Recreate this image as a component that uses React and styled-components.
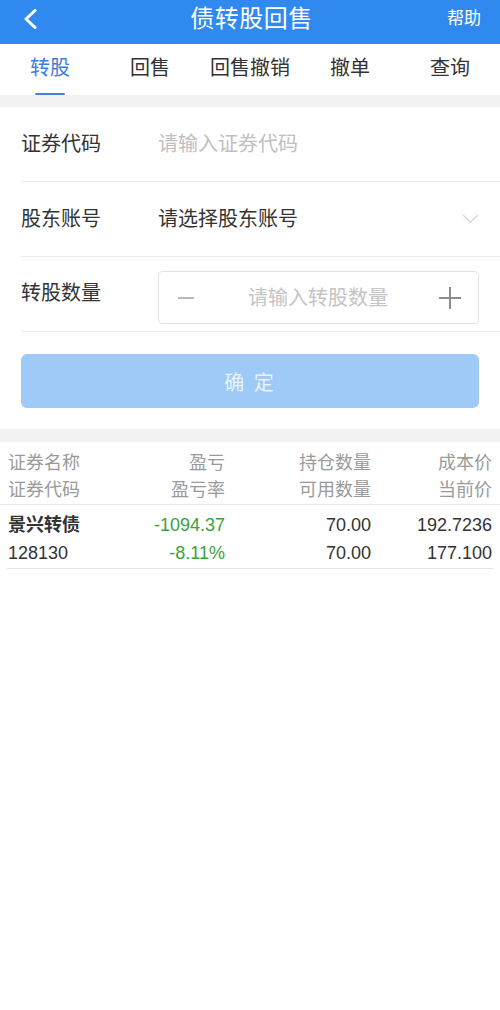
import React from "react";
import styled, { createGlobalStyle } from "styled-components";

const Global = createGlobalStyle`
  html, body { margin: 0; padding: 0; background: #ffffff; }
  body {
    font-family: "Liberation Sans", "Noto Sans CJK SC", sans-serif;
    color: #333333;
  }
  * { box-sizing: border-box; }
`;

const Page = styled.div`
  width: 500px;
  min-height: 1010px;
  background: #ffffff;
`;

const Header = styled.header`
  height: 44px;
  background: #2f89ef;
  display: flex;
  align-items: center;
  padding: 0 19px 7px 22px;
  color: #ffffff;
`;

const BackButton = styled.div`
  width: 90px;
  display: flex;
  align-items: center;
`;

const Title = styled.h1`
  flex: 1;
  margin: 0;
  text-align: center;
  font-size: 24px;
  font-weight: 400;
  line-height: 30px;
  letter-spacing: 0.5px;
`;

const HeaderAction = styled.div`
  width: 90px;
  text-align: right;
  font-size: 17px;
  line-height: 24px;
`;

const Tabs = styled.nav`
  height: 51px;
  display: grid;
  grid-template-columns: repeat(5, 1fr);
  background: #ffffff;
`;

const Tab = styled.div`
  display: flex;
  flex-direction: column;
  align-items: center;
  justify-content: space-between;
  padding-top: 12px;
  font-size: 20px;
  line-height: 24px;
  color: ${(p) => (p.$active ? "#3a7fdc" : "#333333")};
`;

const TabIndicator = styled.span`
  width: 30px;
  height: 2px;
  border-radius: 1px;
  background: ${(p) => (p.$active ? "#4a80d8" : "transparent")};
`;

const Band = styled.div`
  height: ${(p) => p.$h}px;
  background: #f2f2f2;
`;

const Form = styled.section`
  padding-left: 21px;
`;

const Row = styled.div`
  height: 75px;
  display: flex;
  align-items: center;
  border-bottom: 1px solid #ebebeb;
  padding-right: 21px;
`;

const Label = styled.div`
  width: 137px;
  flex-shrink: 0;
  font-size: 20px;
  line-height: 26px;
  color: #333333;
  margin-top: ${(p) => p.$offset || 0}px;
`;

const Value = styled.div`
  flex: 1;
  font-size: 20px;
  line-height: 26px;
  color: ${(p) => (p.$placeholder ? "#c0c0c0" : "#333333")};
`;

const SelectRow = styled.div`
  flex: 1;
  display: flex;
  align-items: center;
  justify-content: space-between;
`;

const Stepper = styled.div`
  flex: 1;
  height: 53px;
  margin-top: 7px;
  border: 1px solid #e3e3e3;
  border-radius: 4px;
  display: flex;
  align-items: center;
  justify-content: space-between;
  padding: 0 16px 0 19px;
`;

const StepperInput = styled.div`
  flex: 1;
  text-align: center;
  font-size: 20px;
  line-height: 26px;
  color: #c4c4c4;
  padding-left: 4px;
`;

const ButtonWrap = styled.div`
  padding: 22px 21px 21px;
`;

const Confirm = styled.div`
  height: 54px;
  border-radius: 6px;
  background: #9fcaf7;
  color: #eaf3fd;
  font-size: 20px;
  display: flex;
  align-items: center;
  justify-content: center;
  letter-spacing: 2px;
`;

const Table = styled.section``;

const HeadGrid = styled.div`
  display: grid;
  grid-template-columns: 92px 125px 146px 121px;
  padding: 8px 8px 0;
  border-bottom: 1px solid #e9e9e9;
  color: #9a9a9a;
  font-size: 18px;
  line-height: 27px;
`;

const DataGrid = styled.div`
  display: grid;
  grid-template-columns: 92px 125px 146px 121px;
  margin: 0 7px;
  padding: 6px 1px 1px;
  border-bottom: 1px solid #e5e5e5;
  font-size: 18px;
  line-height: 28px;
  color: #333333;
`;

const Cell = styled.div`
  text-align: ${(p) => (p.$left ? "left" : "right")};
  white-space: nowrap;
  font-weight: ${(p) => (p.$bold ? 700 : 400)};
  color: ${(p) => (p.$green ? "#3ba23b" : "inherit")};
`;

const tabs = ["转股", "回售", "回售撤销", "撤单", "查询"];

export default function App() {
  return (
    <Page>
      <Global />
      <Header>
        <BackButton>
          <svg width="16" height="20" viewBox="0 0 16 20">
            <polyline
              points="13,1.5 4,10 13,18.5"
              fill="none"
              stroke="#ffffff"
              strokeWidth="3"
              strokeLinecap="round"
              strokeLinejoin="round"
            />
          </svg>
        </BackButton>
        <Title>债转股回售</Title>
        <HeaderAction>帮助</HeaderAction>
      </Header>

      <Tabs>
        {tabs.map((t, i) => (
          <Tab key={t} $active={i === 0}>
            <span>{t}</span>
            <TabIndicator $active={i === 0} />
          </Tab>
        ))}
      </Tabs>

      <Band $h={12} />

      <Form>
        <Row>
          <Label>证券代码</Label>
          <Value $placeholder>请输入证券代码</Value>
        </Row>
        <Row>
          <Label>股东账号</Label>
          <SelectRow>
            <Value>请选择股东账号</Value>
            <svg width="17" height="10" viewBox="0 0 17 10">
              <polyline
                points="1,1 8.5,8 16,1"
                fill="none"
                stroke="#d6d6d6"
                strokeWidth="1.3"
              />
            </svg>
          </SelectRow>
        </Row>
        <Row>
          <Label $offset={-2}>转股数量</Label>
          <Stepper>
            <svg width="16" height="4" viewBox="0 0 16 4">
              <line x1="0" y1="2" x2="16" y2="2" stroke="#a8a8a8" strokeWidth="1.6" />
            </svg>
            <StepperInput>请输入转股数量</StepperInput>
            <svg width="24" height="24" viewBox="0 0 24 24">
              <line x1="1" y1="12" x2="23" y2="12" stroke="#8c8c8c" strokeWidth="2" />
              <line x1="12" y1="1" x2="12" y2="23" stroke="#8c8c8c" strokeWidth="2" />
            </svg>
          </Stepper>
        </Row>
      </Form>

      <ButtonWrap>
        <Confirm>确 定</Confirm>
      </ButtonWrap>

      <Band $h={13} />

      <Table>
        <HeadGrid>
          <Cell $left>证券名称</Cell>
          <Cell>盈亏</Cell>
          <Cell>持仓数量</Cell>
          <Cell>成本价</Cell>
          <Cell $left>证券代码</Cell>
          <Cell>盈亏率</Cell>
          <Cell>可用数量</Cell>
          <Cell>当前价</Cell>
        </HeadGrid>
        <DataGrid>
          <Cell $left $bold>景兴转债</Cell>
          <Cell $green>-1094.37</Cell>
          <Cell>70.00</Cell>
          <Cell>192.7236</Cell>
          <Cell $left>128130</Cell>
          <Cell $green>-8.11%</Cell>
          <Cell>70.00</Cell>
          <Cell>177.100</Cell>
        </DataGrid>
      </Table>
    </Page>
  );
}
